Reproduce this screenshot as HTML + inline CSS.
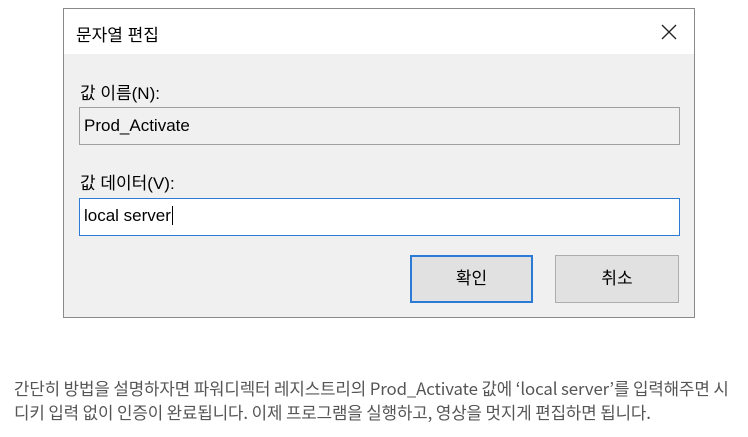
<!DOCTYPE html>
<html><head><meta charset="utf-8"><style>
body{margin:0;width:748px;height:437px;background:#fff;position:relative;overflow:hidden;font-family:"Liberation Sans","Noto Sans CJK KR",sans-serif;}
.dlg{position:absolute;left:63px;top:8px;width:630px;height:308px;border:1px solid #8a8a8a;background:#f0f0f0;}
.tb{position:absolute;left:0;top:0;right:0;height:45px;background:#fff;}
.t{position:absolute;font-size:17px;color:#000;}
.box{position:absolute;box-sizing:border-box;}
.btn{position:absolute;box-sizing:border-box;background:#e1e1e1;font-size:17px;text-align:center;line-height:43px;}
.p{position:absolute;left:14px;font-size:16.8px;color:#555;font-family:"Noto Sans CJK KR",sans-serif;letter-spacing:-0.1px;white-space:nowrap;line-height:20px;}
</style></head><body>
<div class="dlg">
<div class="tb"></div>
<div class="t" style="left:12px;top:12px">문자열 편집</div>
<svg style="position:absolute;left:597px;top:15px" width="16" height="16"><path d="M1 1L15 15M15 1L1 15" stroke="#222" stroke-width="1.3"/></svg>
<div class="t" style="left:16px;top:70px">값 이름(N):</div>
<div class="box" style="left:15px;top:98px;width:601px;height:38px;border:1px solid #a0a0a0;background:#f0f0f0"></div>
<div class="t" style="left:20px;top:107px">Prod_Activate</div>
<div class="t" style="left:16px;top:160px">값 데이터(V):</div>
<div class="box" style="left:15px;top:189px;width:601px;height:38px;border:1px solid #2b7ad6;background:#fff"></div>
<div class="t" style="left:20px;top:197px">local server<span style="border-left:1px solid #000;margin-left:1px"></span></div>
<div class="btn" style="left:346px;top:246px;width:123px;height:48px;border:2px solid #2b7ad6">확인</div>
<div class="btn" style="left:491px;top:246px;width:124px;height:48px;border:1px solid #adadad;line-height:45px">취소</div>
</div>
<div class="p" style="top:378px">간단히 방법을 설명하자면 파워디렉터 레지스트리의 Prod_Activate 값에 ‘local server’를 입력해주면 시</div>
<div class="p" style="top:402px">디키 입력 없이 인증이 완료됩니다. 이제 프로그램을 실행하고, 영상을 멋지게 편집하면 됩니다.</div>
</body></html>
